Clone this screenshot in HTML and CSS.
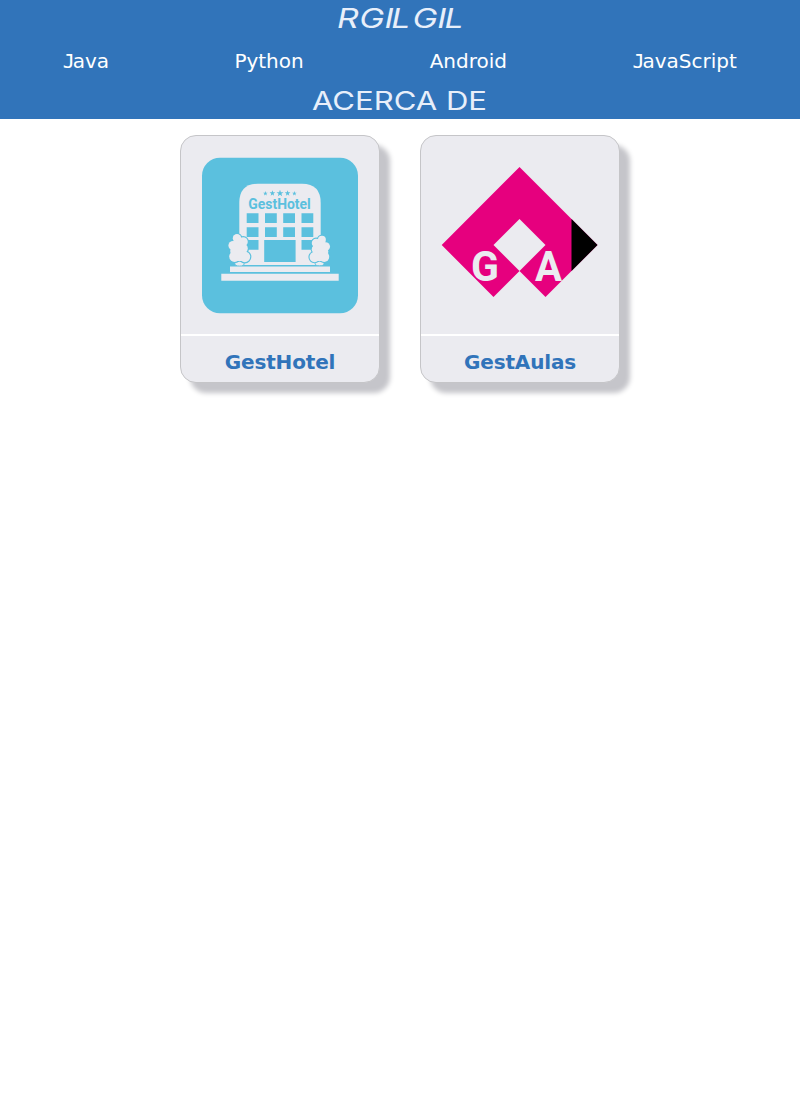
FILE: index.html
```
<!DOCTYPE html>
<html lang="es">
<head>
<meta charset="utf-8">
<title>RGILGIL</title>
<link rel="stylesheet" href="styles.css">
</head>
<body>
<header class="header">
  <svg class="wordmark wordmark-top" viewBox="330 0 140 38"><text transform="translate(337 28) scale(1.25 1)" x="0 17.8 38 43.5 60.5 80.2 86" y="0" font-size="27" font-style="italic">RGILGIL</text></svg>
  <nav class="nav">
    <a class="nav-link starts-j java">Java</a>
    <a class="nav-link python">Python</a>
    <a class="nav-link android">Android</a>
    <a class="nav-link starts-j javascript">JavaScript</a>
  </nav>
  <svg class="wordmark wordmark-about" viewBox="300 83 200 36"><text x="312" y="109.7" textLength="175" lengthAdjust="spacingAndGlyphs" font-size="25">ACERCA DE</text></svg>
</header>
<main class="cards">
  <article class="card">
    <svg class="card-image" viewBox="181 136 198 198">
      <rect x="202" y="157.7" width="156" height="155.6" rx="18" fill="#5bc0de"/>
      <path d="M239.3 265V203Q239.3 183.7 258 183.7H302Q320.7 183.7 320.7 203V265Z" fill="#ebebf0"/>
      <g fill="#5bc0de">
        <path id="star" d="M280 189.7l.9 2.5h2.6l-2.1 1.6.8 2.5-2.2-1.5-2.2 1.5.8-2.5-2.1-1.6h2.6z"/>
        <use href="#star" transform="translate(48.4 29) scale(.8 .85)"/>
        <use href="#star" transform="translate(63.6 29) scale(.8 .85)"/>
        <use href="#star" transform="translate(83.4 58.2) scale(.65 .7)"/>
        <use href="#star" transform="translate(112.4 58.2) scale(.65 .7)"/>
        <text class="icon-text" x="248.3" y="209.4" font-size="14.4" textLength="62.5" lengthAdjust="spacingAndGlyphs">GestHotel</text>
        <path d="M246.7 213.3h11.8v9.8h-11.8zM265 213.3h11.8v9.8H265zM283.2 213.3H295v9.8h-11.8zM301.5 213.3h11.8v9.8h-11.8zM246.7 227.2h11.8v9.8h-11.8zM265 227.2h11.8v9.8H265zM283.2 227.2H295v9.8h-11.8zM301.5 227.2h11.8v9.8h-11.8zM246.7 240h11.8v9.8h-11.8zM301.5 240h11.8v9.8h-11.8zM264.2 240h31.4v22h-31.4z"/>
      </g>
      <g fill="#ebebf0">
        <g id="tree">
          <ellipse cx="239.5" cy="263.7" rx="4.7" ry="2.4" stroke="#5bc0de"/>
          <g stroke="#5bc0de" stroke-width="2">
            <circle cx="237" cy="238.3" r="4.4"/><circle cx="243.2" cy="241.8" r="4.8"/><circle cx="233" cy="245.5" r="4.8"/><circle cx="243" cy="248.5" r="5"/><circle cx="234.6" cy="256.5" r="5.6"/><circle cx="244.8" cy="256.8" r="5.6"/><circle cx="235" cy="251" r="5"/>
          </g>
          <path d="M234 240H243L246 250L242 261H236L231 255V247Z"/>
          <circle cx="237" cy="238.3" r="4.2"/><circle cx="243.2" cy="241.8" r="4.6"/><circle cx="233" cy="245.5" r="4.6"/><circle cx="243" cy="248.5" r="4.8"/><circle cx="234.6" cy="256.5" r="5.4"/><circle cx="244.8" cy="256.8" r="5.4"/><circle cx="235" cy="251" r="4.8"/>
        </g>
        <use href="#tree" transform="matrix(-.94 0 0 .94 544.7 15.7)"/>
        <path d="M230 266.5h100v5.5H230zM221.3 273.7h117.4v7H221.3z"/>
      </g>
    </svg>
    <h2 class="card-title">GestHotel</h2>
  </article>
  <article class="card">
    <svg class="card-image" viewBox="421 136 198 198">
      <path d="M519.5 167L597.5 245L545.5 297L519.5 271L493.5 297L441.7 245Z" fill="#e6007e"/>
      <path d="M571.5 219L597.5 245L571.5 271Z"/>
      <path d="M519.5 219L545.5 245L519.5 271L493.5 245Z" fill="#ebebf0"/>
      <g class="icon-text" fill="#ebebf0" font-size="42.5">
        <text x="471" y="281" textLength="28" lengthAdjust="spacingAndGlyphs">G</text>
        <text x="535" y="280.8" textLength="27" lengthAdjust="spacingAndGlyphs">A</text>
      </g>
    </svg>
    <h2 class="card-title">GestAulas</h2>
  </article>
</main>
</body>
</html>
```
FILE: styles.css
```
* { box-sizing: border-box; }
body {
  margin: 0;
  min-height: 100vh;
  background: #fff;
  font-family: Verdana, "DejaVu Sans", sans-serif;
}
.header {
  height: 119px;
  display: flex;
  flex-direction: column;
  align-items: center;
  background: #3174ba;
}
.wordmark {
  display: block;
  fill: #e8effa;
  font-family: Inter, "DejaVu Sans", sans-serif;
}
.wordmark-top { width: 140px; height: 38px; }
.wordmark-about { width: 200px; height: 36px; }
.nav {
  width: 100%;
  height: 45px;
  display: flex;
  justify-content: space-around;
  align-items: center;
}
.nav-link {
  display: block;
  color: #fff;
  font-size: 20px;
  line-height: 24px;
  white-space: nowrap;
}
.java { width: 45px; }
.python { width: 69px; }
.android { width: 77px; }
.javascript { width: 104px; }
.starts-j::first-letter {
  font-family: "DejaVu Sans Mono", monospace;
  margin-left: -0.5px;
  margin-right: -2px;
}
.cards {
  display: flex;
  justify-content: center;
  gap: 40px;
  padding: 16px 0 24px;
}
.card {
  width: 200px;
  height: 248px;
  border: 1px solid #c5c5c8;
  border-radius: 16px;
  background: #ebebf0;
  box-shadow: 10px 10px 5px #c5c5ca;
  overflow: hidden;
}
.card-image {
  display: block;
  width: 198px;
  height: 198px;
}
.icon-text {
  font-family: Roboto, sans-serif;
  font-weight: 700;
}
.card-title {
  height: 48px;
  margin: 0;
  padding-top: 2px;
  border-top: 2px solid #fff;
  color: #3174ba;
  font-size: 20px;
  font-weight: 700;
  letter-spacing: -0.15px;
  line-height: 48px;
  text-align: center;
}
```
